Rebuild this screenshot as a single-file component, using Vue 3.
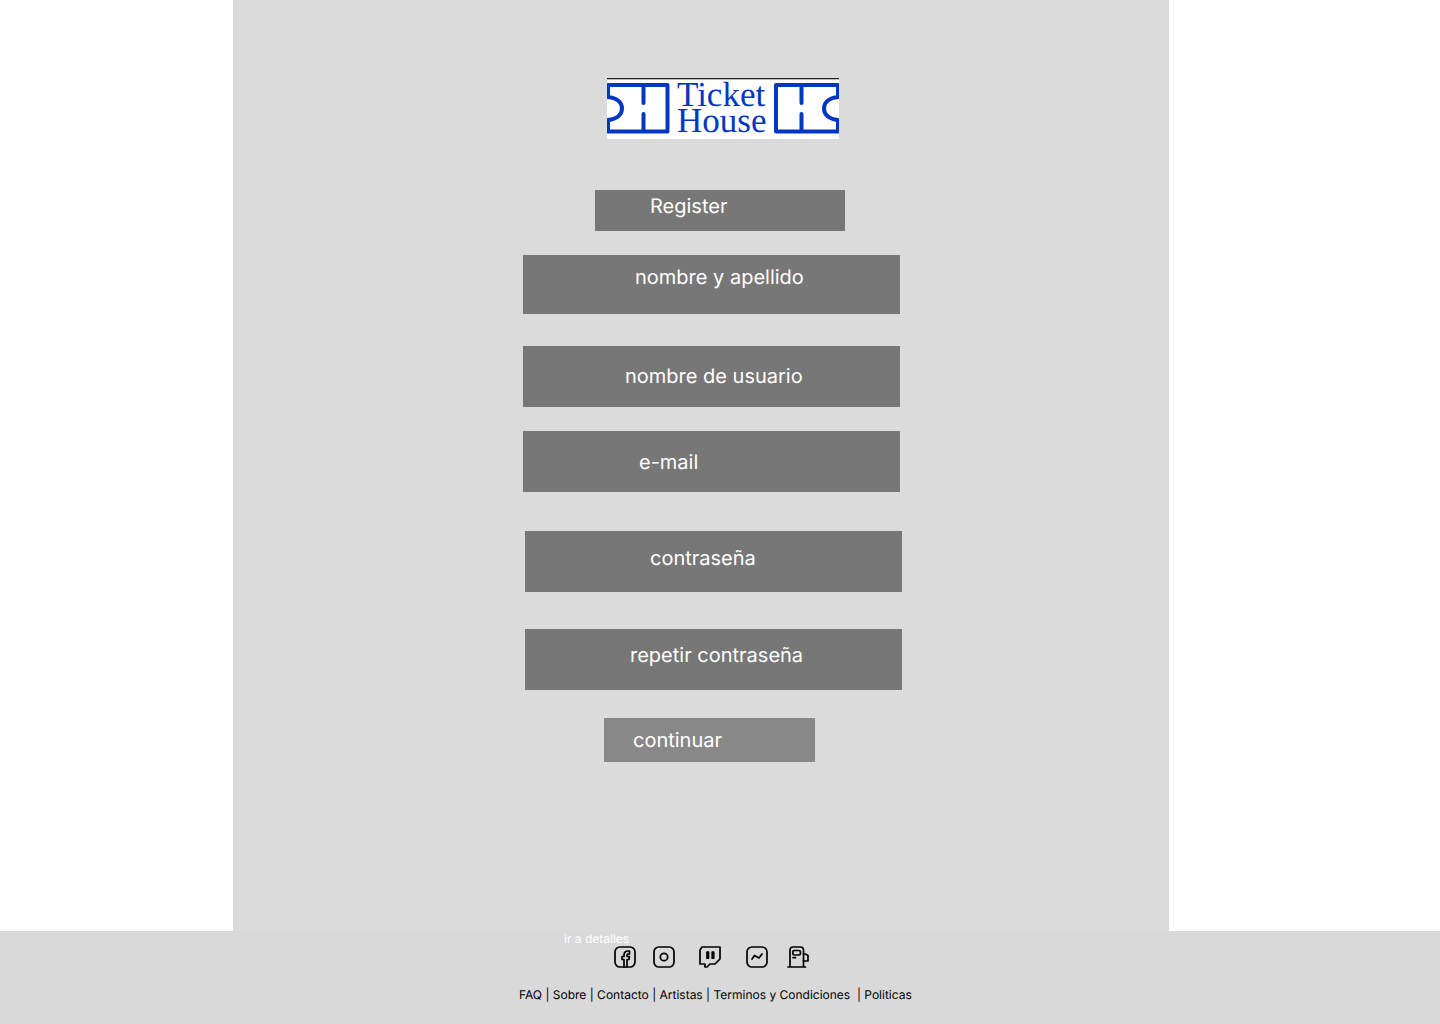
<script setup>
import { ref } from 'vue'

const fields = [
  { id: 'fullname', label: 'nombre y apellido', type: 'text' },
  { id: 'username', label: 'nombre de usuario', type: 'text' },
  { id: 'email', label: 'e-mail', type: 'email' },
  { id: 'password', label: 'contraseña', type: 'password' },
  { id: 'repeat', label: 'repetir contraseña', type: 'password' },
]
const values = ref({})
</script>

<template>
  <div class="page">
    <main class="panel">
      <form class="form" @submit.prevent>
        <svg class="logo" viewBox="0 0 232 61" role="img" aria-label="Ticket House">
          <rect width="232" height="61" fill="#fff" />
          <rect width="232" height="1" fill="#222" />
          <rect y="1" width="232" height="1" fill="#bbb" />
          <g fill="none" stroke="#0436c4" stroke-width="4" stroke-linecap="round" stroke-linejoin="round">
            <path d="M1 19V7H60.500V53.500H1V42C10 41 15 36.500 15 30.500S10 20 1 19M36.500 7V25M36.500 36V53" />
            <path d="M231 19V7H169V53.500H231V42C222 41 217 36.500 217 30.500S222 20 231 19M194.500 7V25M194.500 36V53" />
          </g>
          <text x="70" y="28">Ticket</text>
          <text x="70" y="54">House</text>
        </svg>
        <h1 class="title">Register</h1>
        <template v-for="f in fields" :key="f.id">
          <input
            :id="f.id"
            v-model="values[f.id]"
            :class="['field', f.id]"
            :type="f.type"
            :placeholder="f.label"
            :aria-label="f.label"
          />
        </template>
        <button class="submit" type="submit">continuar</button>
      </form>
    </main>

    <footer class="footer">
      <div class="footer-inner">
        <a class="details" href="#">ir a detalles</a>
        <nav class="social" aria-label="Redes sociales">
          <a href="#" aria-label="Facebook">
            <svg viewBox="0 0 24 24">
              <path d="M17 2H7a5 5 0 0 0-5 5v10a5 5 0 0 0 5 5h10a5 5 0 0 0 5-5V7a5 5 0 0 0-5-5Z" />
              <path d="M11 22v-7.500H9v-3h2V10c0-2.500 1.500-4 4-4h1.500v3H15c-.7 0-1 .3-1 1v1.500h2.500l-.5 3h-2V22" />
            </svg>
          </a>
          <a href="#" aria-label="Instagram">
            <svg viewBox="0 0 24 24">
              <path d="M17 2H7a5 5 0 0 0-5 5v10a5 5 0 0 0 5 5h10a5 5 0 0 0 5-5V7a5 5 0 0 0-5-5Z" />
              <circle cx="12" cy="12" r="3.700" />
            </svg>
          </a>
          <a class="twitch" href="#" aria-label="Twitch">
            <svg viewBox="0 0 24 24">
              <path d="M4 2h18v12l-5 5h-5l-3 3H7v-3H2V5Z" />
              <path d="M9 7.200h1.500v6H9ZM14.200 7.200h1.500v6h-1.500Z" />
            </svg>
          </a>
          <a class="messenger" href="#" aria-label="Messenger">
            <svg viewBox="0 0 24 24">
              <path d="M17 2H7a5 5 0 0 0-5 5v10a5 5 0 0 0 5 5h10a5 5 0 0 0 5-5V7a5 5 0 0 0-5-5Z" />
              <path d="m7 14 2.500-3.500 4.500 2.500 3-4" />
            </svg>
          </a>
          <a class="fuel" href="#" aria-label="Estaciones">
            <svg viewBox="0 0 24 24">
              <path d="M4 22V5c0-2 1-3 3-3h7.500c2 0 3 1 3 3v17M2 22h17.500M7 12.700h2.500" />
              <rect x="6.800" y="5.500" width="7.600" height="4.500" rx="1.500" />
              <path d="M17.500 9h2l2.500 1.500V16h-4.500" />
            </svg>
          </a>
        </nav>
        <nav class="links" aria-label="Enlaces">
          <a href="#">FAQ</a> | <a href="#">Sobre</a> | <a href="#">Contacto</a> | <a href="#">Artistas</a> | <a href="#">Terminos y Condiciones</a>&nbsp; | <a href="#">Politicas</a>
        </nav>
      </div>
    </footer>
  </div>
</template>

<style>
body {
  margin: 0;
  background: #fff;
}
</style>

<style scoped>
.page {
  display: flex;
  flex-direction: column;
  min-height: 100vh;
  font-family: Inter, sans-serif;
}
.page * {
  box-sizing: border-box;
  text-rendering: geometricPrecision;
}
.panel {
  flex: 1;
  display: flex;
  justify-content: center;
  width: 65%;
  margin-left: 16.18%;
  padding: 78px 0 80px 23px;
  background: #dbdbdb;
}
.form {
  display: flex;
  flex-direction: column;
  width: 379px;
}
.logo {
  display: block;
  width: 232px;
  height: 61px;
  margin-left: 84px;
}
.logo text {
  font: 35px "Liberation Serif", serif;
  fill: #0436c4;
}
.title,
.field,
.submit {
  border: 0;
  border-radius: 0;
  outline-offset: 2px;
  background: #777;
  color: #fff;
  font: 400 20px/24px Inter, sans-serif;
  text-align: left;
}
.title {
  width: 250px;
  height: 41px;
  margin: 51px 0 0 72px;
  padding: 4px 0 0 55px;
}
.field {
  width: 377px;
  height: 61px;
}
.field::placeholder {
  color: #fff;
  opacity: 1;
}
.fullname {
  height: 59px;
  margin-top: 24px;
  padding: 0 0 15px 112px;
}
.username {
  margin-top: 32px;
  padding: 0 0 2px 102px;
}
.email {
  margin-top: 24px;
  padding: 0 0 0 116px;
}
.password {
  align-self: flex-end;
  margin-top: 39px;
  padding: 0 0 7px 125px;
}
.repeat {
  align-self: flex-end;
  margin-top: 37px;
  padding: 0 0 9px 105px;
}
.submit {
  width: 211px;
  height: 44px;
  margin: 28px 0 0 81px;
  padding: 0 0 0 29px;
  background: #888;
}
.footer {
  display: flex;
  justify-content: center;
  height: 93px;
  background: #d9d9d9;
  color: #000;
  font-size: 12px;
  line-height: 16px;
}
.footer-inner {
  position: relative;
  width: 402px;
  padding: 14px 0 0;
}
.footer a {
  color: inherit;
  text-decoration: none;
}
.footer .details {
  position: absolute;
  top: 0;
  left: 45px;
  color: #fff;
}
.social {
  display: flex;
  gap: 15px;
  margin-left: 94px;
}
.social a,
.social svg {
  display: block;
  width: 24px;
  height: 24px;
}
.social svg {
  fill: none;
  stroke: #000;
  stroke-width: 1.7;
  stroke-linecap: round;
  stroke-linejoin: round;
}
.twitch {
  margin-left: 7px;
}
.messenger {
  margin-left: 8px;
}
.fuel {
  margin-left: 2px;
}
.links {
  margin-top: 18px;
  white-space: nowrap;
}
</style>
